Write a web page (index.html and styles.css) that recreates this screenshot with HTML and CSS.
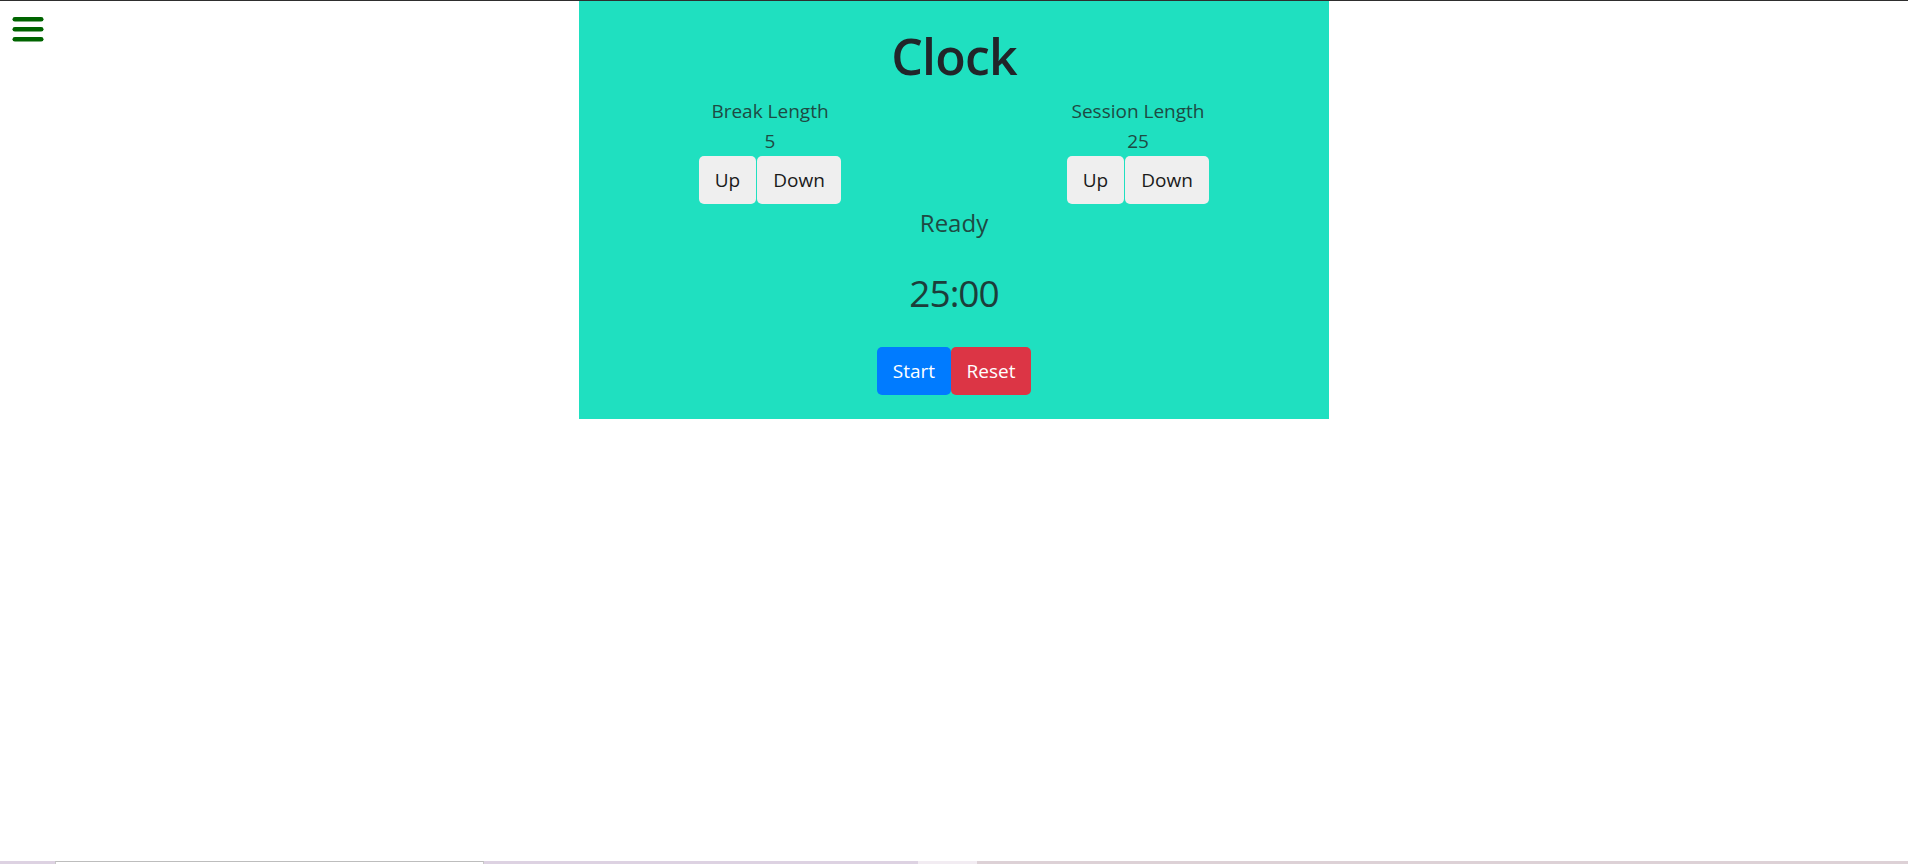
FILE: index.html
```html
<!DOCTYPE html>
<html lang="en">
<head>
<meta charset="utf-8">
<title>Clock</title>
<link rel="stylesheet" href="styles.css">
</head>
<body>
<div class="page">
  <div class="side">
    <button class="menu" aria-label="Menu">
      <svg width="32" height="26" viewBox="0 0 32 26">
        <rect x="0.5" y="0" width="31" height="4.6" rx="2.3" fill="#006400"/>
        <rect x="0.5" y="10" width="31" height="4.6" rx="2.3" fill="#006400"/>
        <rect x="0.5" y="20" width="31" height="4.6" rx="2.3" fill="#006400"/>
      </svg>
    </button>
  </div>
  <main class="panel">
    <h1 class="title">Clock</h1>
    <div class="settings">
      <div class="setting">
        <div class="label">Break Length</div>
        <div class="value">5</div>
        <div class="pair">
          <button class="btn btn-light btn-up">Up</button><button class="btn btn-light btn-down">Down</button>
        </div>
      </div>
      <div class="setting">
        <div class="label">Session Length</div>
        <div class="value">25</div>
        <div class="pair">
          <button class="btn btn-light btn-up">Up</button><button class="btn btn-light btn-down">Down</button>
        </div>
      </div>
    </div>
    <div class="status">Ready</div>
    <div class="time">25:00</div>
    <div class="controls">
      <button class="btn btn-start">Start</button><button class="btn btn-reset">Reset</button>
    </div>
  </main>
  <div class="side"></div>
</div>
<footer class="strip">
  <span class="seg seg-a"></span>
  <span class="seg seg-box"></span>
  <span class="seg seg-b"></span>
  <span class="seg seg-light"></span>
  <span class="seg seg-c"></span>
</footer>
</body>
</html>
```
FILE: styles.css
```css
html, body {
  margin: 0;
  padding: 0;
}
body {
  height: 100vh;
  box-sizing: border-box;
  border-top: 1px solid #2e2e2e;
  display: flex;
  flex-direction: column;
  background: #fff;
  font-family: "Open Sans", "Noto Sans", sans-serif;
  color: #212529;
}
.page {
  flex: 1;
  display: grid;
  grid-template-columns: 1fr 750px 1fr;
  align-items: start;
}
.side {
  padding: 16px 0 0 12px;
}
.menu {
  display: block;
  border: 0;
  padding: 0;
  margin: 0;
  background: none;
  line-height: 0;
}
.panel {
  background: #1fe0c0;
  padding: 25px 0 24px;
  text-align: center;
}
.title {
  margin: 0 0 10px;
  font-size: 50px;
  line-height: 60px;
  font-weight: 600;
  letter-spacing: -0.8px;
  color: #212529;
}
.settings {
  display: grid;
  grid-template-columns: 368px 368px;
  justify-content: center;
}
.setting {
  display: flex;
  flex-direction: column;
  align-items: center;
}
.label, .value {
  font-size: 19px;
  line-height: 30px;
  color: #1e4a43;
}
.pair, .controls {
  display: flex;
  justify-content: center;
}
.btn {
  box-sizing: border-box;
  height: 48px;
  border: 1px solid transparent;
  border-radius: 5px;
  font-family: "Open Sans", "Noto Sans", sans-serif;
  font-size: 19px;
  line-height: 30px;
  padding: 7px 0;
  text-align: center;
  margin: 0;
}
.btn-light {
  background: #efefef;
  color: #1a1a1a;
}
.btn-up { width: 57px; }
.btn-down { width: 84px; margin-left: 1px; }
.status {
  margin-top: 4px;
  font-size: 24px;
  line-height: 30px;
  color: #1e4a43;
}
.time {
  margin-top: 31px;
  font-size: 37px;
  line-height: 48px;
  letter-spacing: -1px;
  color: #1c3d3a;
}
.controls {
  margin-top: 30px;
}
.btn-start {
  width: 74px;
  background: #007bff;
  color: #fff;
}
.btn-reset {
  width: 80px;
  background: #dc3545;
  color: #fff;
}
.strip {
  height: 3px;
  display: flex;
  background: #ddd2e2;
}
.seg { display: block; height: 3px; }
.seg-a { width: 55px; }
.seg-box { width: 429px; background: #fff; box-sizing: border-box; border-top: 1px solid #bdbdbd; border-left: 1px solid #c8c8c8; border-right: 1px solid #c8c8c8; }
.seg-b { width: 434px; }
.seg-light { width: 59px; background: #f2ecf2; }
.seg-c { flex: 1; background: #ddd1d6; }
```
